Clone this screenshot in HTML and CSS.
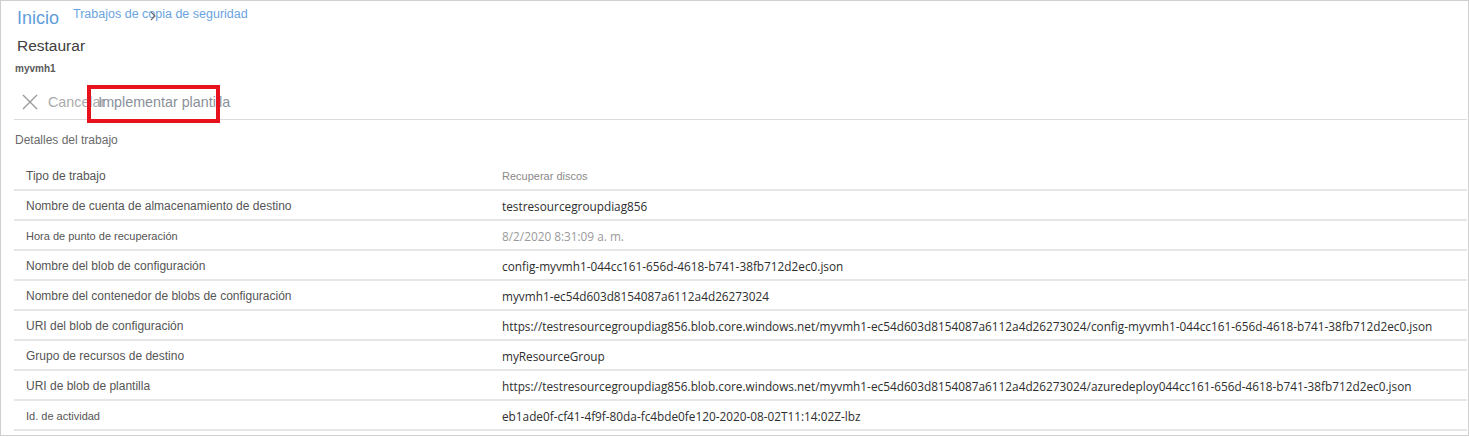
FILE: index.html
```html
<!DOCTYPE html>
<html lang="es">
<head>
<meta charset="utf-8">
<title>Restaurar</title>
<link rel="stylesheet" href="styles.css">
</head>
<body>
<div class="frame">
  <div class="breadcrumb">
    <span class="home">Inicio</span>
    <span class="crumb">Trabajos de copia de seguridad</span>
    <svg class="chev" width="6" height="10" viewBox="0 0 6 10"><path d="M0.8 0.8 L5 5 L0.8 9.2" stroke="#666" stroke-width="1.1" fill="none"/></svg>
  </div>
  <div class="title">Restaurar</div>
  <div class="subtitle">myvmh1</div>
  <div class="toolbar">
    <svg class="xicon" width="16" height="16" viewBox="0 0 16 16"><path d="M1 1 L15 15 M15 1 L1 15" stroke="#9a9a9a" stroke-width="1.4" fill="none"/></svg>
    <span class="cancel">Cancelar</span>
    <span class="deploy">Implementar plantilla</span>
    <span class="highlight"></span>
  </div>
  <div class="section">Detalles del trabajo</div>
  <div class="table">
    <div class="row"><div class="label">Tipo de trabajo</div><div class="value muted small">Recuperar discos</div></div>
    <div class="row"><div class="label">Nombre de cuenta de almacenamiento de destino</div><div class="value">testresourcegroupdiag856</div></div>
    <div class="row"><div class="label small">Hora de punto de recuperación</div><div class="value muted">8/2/2020 8:31:09 a. m.</div></div>
    <div class="row"><div class="label">Nombre del blob de configuración</div><div class="value">config-myvmh1-044cc161-656d-4618-b741-38fb712d2ec0.json</div></div>
    <div class="row"><div class="label">Nombre del contenedor de blobs de configuración</div><div class="value">myvmh1-ec54d603d8154087a6112a4d26273024</div></div>
    <div class="row"><div class="label">URI del blob de configuración</div><div class="value">https://testresourcegroupdiag856.blob.core.windows.net/myvmh1-ec54d603d8154087a6112a4d26273024/config-myvmh1-044cc161-656d-4618-b741-38fb712d2ec0.json</div></div>
    <div class="row"><div class="label">Grupo de recursos de destino</div><div class="value">myResourceGroup</div></div>
    <div class="row"><div class="label">URI de blob de plantilla</div><div class="value">https://testresourcegroupdiag856.blob.core.windows.net/myvmh1-ec54d603d8154087a6112a4d26273024/azuredeploy044cc161-656d-4618-b741-38fb712d2ec0.json</div></div>
    <div class="row"><div class="label small">Id. de actividad</div><div class="value">eb1ade0f-cf41-4f9f-80da-fc4bde0fe120-2020-08-02T11:14:02Z-lbz</div></div>
  </div>
</div>
</body>
</html>
```

FILE: styles.css
```css
html, body {
  margin: 0;
  padding: 0;
  background: #fff;
}
body {
  font-family: "Liberation Sans", Arial, sans-serif;
}
.frame {
  width: 1469px;
  height: 436px;
  box-sizing: border-box;
  border: 1px solid #cfcfcf;
  padding: 0 1px 0 13px;
}
.breadcrumb {
  position: relative;
  display: flex;
  align-items: flex-start;
  height: 29px;
  padding-left: 3px;
}
.home {
  font-size: 18px;
  color: #5f9ddb;
  margin-top: 7px;
  line-height: 21px;
}
.crumb {
  font-size: 12.5px;
  color: #6aa3df;
  margin-left: 14px;
  margin-top: 5px;
  line-height: 16px;
}
.chev {
  position: absolute;
  left: 136px;
  top: 10px;
}
.title {
  font-size: 15.5px;
  color: #404040;
  padding-left: 3px;
  line-height: 18px;
  height: 30px;
  padding-top: 7px;
  box-sizing: border-box;
}
.subtitle {
  font-size: 10px;
  font-weight: bold;
  color: #5a5a5a;
  padding-left: 1px;
  height: 16px;
  line-height: 18px;
}
.toolbar {
  position: relative;
  display: flex;
  align-items: center;
  height: 44px;
  box-sizing: border-box;
  padding-top: 9px;
  border-bottom: 1px solid #dcdcdc;
  padding-left: 8px;
}
.xicon {
  flex: none;
  margin-top: 0;
}
.cancel {
  font-size: 14.3px;
  color: #ababab;
  margin-left: 10px;
}
.deploy {
  font-size: 14.3px;
  color: #8a9099;
  margin-left: -7px;
}
.highlight {
  position: absolute;
  left: 73px;
  top: 9px;
  width: 133px;
  height: 38px;
  box-sizing: border-box;
  border: 4px solid #e8121f;
}
.section {
  font-size: 12px;
  color: #6a6a6a;
  padding-left: 1px;
  height: 41px;
  line-height: 16px;
  padding-top: 12px;
  box-sizing: border-box;
}
.table {
  display: flex;
  flex-direction: column;
}
.row {
  display: flex;
  align-items: center;
  height: 30px;
  box-sizing: border-box;
  padding-top: 1px;
  border-bottom: 2px solid #e6e6e6;
}
.label {
  width: 476px;
  flex: none;
  padding-left: 12px;
  font-size: 12px;
  color: #555;
}
.label.small {
  font-size: 11px;
}
.value {
  font-family: "Open Sans", "Noto Sans", sans-serif;
  font-size: 11.8px;
  color: #2e2e2e;
  white-space: nowrap;
}
.value.muted {
  color: #9a9a9a;
}
.value.small {
  font-family: "Liberation Sans", Arial, sans-serif;
  font-size: 11px;
  color: #8a8a8a;
}
```
